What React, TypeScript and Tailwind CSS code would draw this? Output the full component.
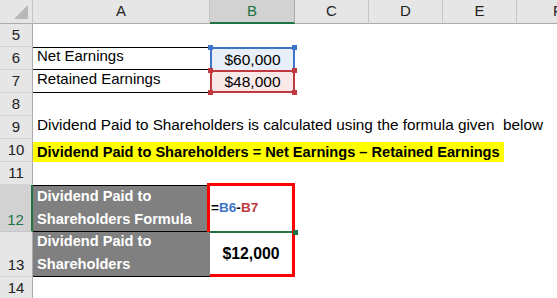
import React from "react";

const font = { fontFamily: '"Liberation Sans", Arial, sans-serif' };

function ColHead({ label, active }: { label: string; active?: boolean }) {
  return (
    <div
      className={`flex items-center justify-center border-r border-b text-[15px] ${
        active
          ? "bg-[#d2d2d2] text-[#217346] border-r-[#ababab] border-b-2 border-b-[#217346]"
          : "bg-[#e6e6e6] text-[#222] border-r-[#c6c6c6] border-b-[#ababab]"
      }`}
    >
      {label}
    </div>
  );
}

function RowHead({ n, active }: { n: number; active?: boolean }) {
  return (
    <div
      className={`flex items-end justify-center pb-[1px] border-b text-[15px] leading-[20px] ${
        active
          ? "bg-[#d2d2d2] text-[#217346] border-b-[#c6c6c6] border-r-2 border-r-[#217346]"
          : "bg-[#e6e6e6] text-[#222] border-b-[#d4d4d4] border-r border-r-[#ababab]"
      }`}
    >
      {n}
    </div>
  );
}

function Corner({ color, className }: { color: string; className: string }) {
  return <span className={`absolute w-[5px] h-[5px] ${color} ${className}`} />;
}

export default function App() {
  return (
    <div
      style={font}
      className="w-[557px] h-[298px] overflow-hidden bg-white text-black grid grid-cols-[33px_177px_85px_74px_74px_74px_1fr] grid-rows-[24px_23px_23px_23px_23px_23px_23px_23px_47px_45px_23px]"
    >
      {/* header */}
      <div className="relative bg-[#e6e6e6] border-r border-b border-r-[#c6c6c6] border-b-[#ababab]">
        <svg className="absolute right-[4px] bottom-[4px]" width="14" height="14" viewBox="0 0 14 14">
          <polygon points="14,0 14,14 0,14" fill="#b7b7b7" />
        </svg>
      </div>
      <ColHead label="A" />
      <ColHead label="B" active />
      <ColHead label="C" />
      <ColHead label="D" />
      <ColHead label="E" />
      <div className="bg-[#e6e6e6] border-b border-b-[#ababab] text-[15px] flex items-center pl-[36px] text-[#222]">F</div>

      {/* row 5 */}
      <RowHead n={5} />
      <div className="col-span-6" />

      {/* row 6 */}
      <RowHead n={6} />
      <div className="border-y border-black flex items-end pl-[4px] pb-[2px] text-[15px]">Net Earnings</div>
      <div className="relative bg-[#e8eff9] border-t-2 border-x-2 border-[#3f75c8] flex items-center justify-center text-[15.5px]">
        $60,000
        <Corner color="bg-[#3f75c8]" className="-left-[4px] -top-[4px]" />
        <Corner color="bg-[#3f75c8]" className="-right-[4px] -top-[4px]" />
      </div>
      <div className="col-span-4" />

      {/* row 7 */}
      <RowHead n={7} />
      <div className="border-b border-black flex items-end pl-[4px] pb-[2px] text-[15px]">Retained Earnings</div>
      <div className="relative bg-[#f9e8e8] border-2 border-[#c0393f] flex items-center justify-center text-[15.5px]">
        $48,000
        <Corner color="bg-[#c0393f]" className="-left-[4px] -top-[4px]" />
        <Corner color="bg-[#c0393f]" className="-right-[4px] -top-[4px]" />
        <Corner color="bg-[#c0393f]" className="-left-[4px] -bottom-[4px]" />
        <Corner color="bg-[#c0393f]" className="-right-[4px] -bottom-[4px]" />
      </div>
      <div className="col-span-4" />

      {/* row 8 */}
      <RowHead n={8} />
      <div className="col-span-6" />

      {/* row 9 */}
      <RowHead n={9} />
      <div className="col-span-6 flex items-end pl-[4px] pb-[2px] text-[15.3px] whitespace-pre">
        Dividend Paid to Shareholders is calculated using the formula given  below
      </div>

      {/* row 10 */}
      <RowHead n={10} />
      <div className="col-span-6 flex items-end">
        <span className="bg-[#ffff00] font-bold text-[14.6px] pl-[4px] pr-[4px] h-[20px] leading-[20px] whitespace-pre">
          Dividend Paid to Shareholders = Net Earnings – Retained Earnings
        </span>
      </div>

      {/* row 11 */}
      <RowHead n={11} />
      <div className="col-span-6" />

      {/* row 12 */}
      <RowHead n={12} active />
      <div className="bg-[#808080] border-t border-b border-black text-white font-bold text-[14.6px] leading-[23px] pl-[4px] flex flex-col justify-end">
        <span>Dividend Paid to</span>
        <span>Shareholders Formula</span>
      </div>
      <div className="row-span-2 -mt-[2px] -ml-[3px] border-[3px] border-[#ff0000] flex flex-col">
        <div className="relative h-[47px] border-b-2 border-[#217346] flex items-center pl-[1px] font-bold text-[13.6px]">
          <span>=</span>
          <span className="text-[#3f75c8]">B6</span>
          <span>-</span>
          <span className="text-[#c0393f]">B7</span>
          <span className="absolute -right-[6px] -bottom-[4px] w-[5px] h-[5px] bg-[#217346]" />
        </div>
        <div className="flex-1 flex items-center justify-center font-bold text-[15.8px]">$12,000</div>
      </div>
      <div className="col-span-4" />

      {/* row 13 */}
      <RowHead n={13} />
      <div className="bg-[#808080] border-b border-black text-white font-bold text-[14.6px] leading-[23px] pl-[4px] flex flex-col justify-end">
        <span>Dividend Paid to</span>
        <span>Shareholders</span>
      </div>
      <div className="col-span-4" />

      {/* row 14 */}
      <RowHead n={14} />
      <div className="col-span-6" />
    </div>
  );
}
